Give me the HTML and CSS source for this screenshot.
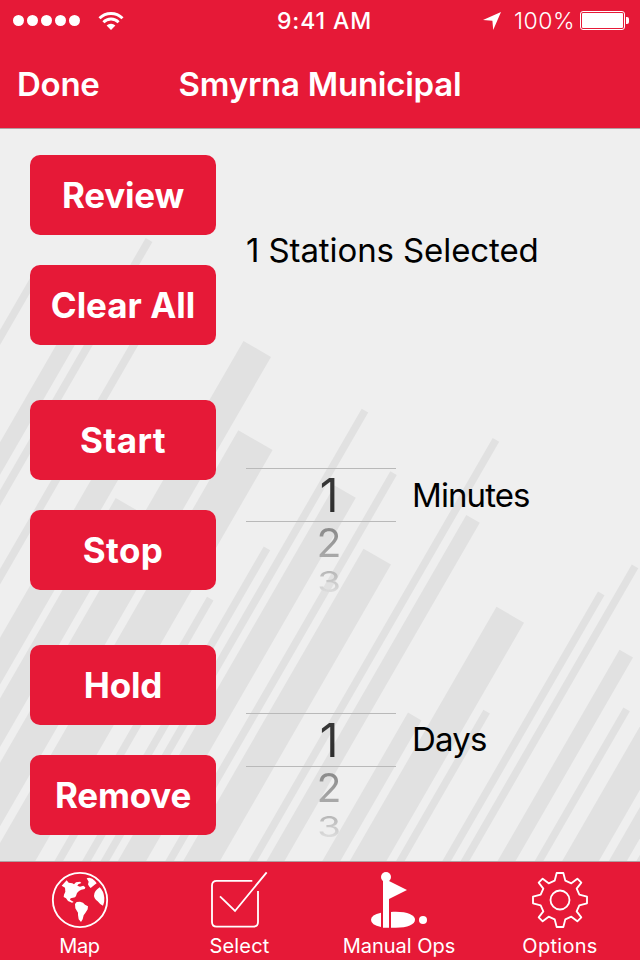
FILE: index.html
```html
<!DOCTYPE html>
<html lang="en">
<head>
  <meta charset="UTF-8">
  <title>Smyrna Municipal</title>
  <link rel="stylesheet" href="styles.css">
</head>
<body>
  <header>
    <div class="status-bar">
      <div class="status-left">
        <span class="dot"></span><span class="dot"></span><span class="dot"></span><span class="dot"></span><span class="dot"></span>
        <svg class="wifi" width="26" height="20" viewBox="0 0 26 20">
          <g fill="none" stroke="#fff" stroke-width="2.9">
            <path d="M1.500 7.200A16.300 16.300 0 0 1 24.500 7.200"/>
            <path d="M5.400 11.200A10.800 10.800 0 0 1 20.600 11.200"/>
          </g>
          <path d="M8.600 14.600A6.200 6.200 0 0 1 17.400 14.600L13 19Z" fill="#fff"/>
        </svg>
      </div>
      <div class="time">9:41 AM</div>
      <div class="status-right">
        <svg class="location" width="20" height="20" viewBox="0 0 20 20">
          <path d="M19 1L11.200 19L10.400 9.800L1 9Z" fill="#fff"/>
        </svg>
        <span class="percent">100%</span>
        <svg class="battery" width="50" height="20" viewBox="0 0 50 20">
          <rect x="0.5" y="0.5" width="44" height="18" rx="2.5" fill="none" stroke="#fff"/>
          <rect x="2" y="2" width="41" height="15" rx="1" fill="#fff"/>
          <path d="M46 6h1q2 0 2 2v3q0 2-2 2H46z" fill="#fff"/>
        </svg>
      </div>
    </div>
    <div class="nav-bar">
      <a class="done">Done</a>
      <h1>Smyrna Municipal</h1>
    </div>
  </header>

  <main>
    <svg class="stripes" width="640" height="732" viewBox="0 129 640 732" fill="#e1e1e1">
      <path d="M37 266l6.500 3.750l-433 750l-6.500-3.750z"/>
      <path d="M90 286.400l14 8.100l-433 750l-14-8.100z"/>
      <path d="M145.700 238l6.700 3.900l-433 750l-6.700-3.900z"/>
      <path d="M150 309.300l6.700 3.900l-433 750l-6.700-3.900z"/>
      <path d="M120 429.800l20.300 11.700l-433 750l-20.300-11.700z"/>
      <path d="M115.700 498l21 12.100l-433 750l-21-12.100z"/>
      <path d="M243.500 341l27.500 15.900l-433 750l-27.500-15.900z"/>
      <path d="M238.300 430.200l34.300 19.800l-433 750l-34.300-19.800z"/>
      <path d="M207 596.800l6.500 3.750l-433 750l-6.500-3.750z"/>
      <path d="M263.700 546.500l6.500 3.750l-433 750l-6.500-3.750z"/>
      <path d="M361.700 408.700l6.500 3.750l-433 750l-6.500-3.750z"/>
      <path d="M334.600 485.600l21.200 12.200l-433 750l-21.200-12.200z"/>
      <path d="M390.300 471.300l6.500 3.750l-433 750l-6.500-3.750z"/>
      <path d="M363.500 548.700l27.500 15.900l-433 750l-27.500-15.900z"/>
      <path d="M492.700 438l6.500 3.750l-433 750l-6.500-3.750z"/>
      <path d="M466.300 515l13.500 7.800l-433 750l-13.500-7.800z"/>
      <path d="M408 712.600l13.500 7.800l-433 750l-13.500-7.800z"/>
      <path d="M496.500 606.800l27.500 15.900l-433 750l-27.500-15.900z"/>
      <path d="M483.400 709.700l6.500 3.750l-433 750l-6.500-3.750z"/>
      <path d="M598 591.400l6.500 3.750l-433 750l-6.500-3.750z"/>
      <path d="M631.800 564.500l6.500 3.750l-433 750l-6.500-3.750z"/>
      <path d="M619.500 649.800l13.500 7.800l-433 750l-13.500-7.800z"/>
      <path d="M623.400 707.400l6.500 3.750l-433 750l-6.500-3.750z"/>
      <path d="M660 691.600l27.500 15.900l-433 750l-27.500-15.900z"/>
      <path d="M660 772.400l13.500 7.800l-433 750l-13.500-7.800z"/>
      <path d="M660 820l27.500 15.900l-433 750l-27.500-15.900z"/>
    </svg>

    <section class="group">
      <div class="buttons">
        <button class="review">Review</button>
        <button class="clear">Clear All</button>
      </div>
      <p class="selected-count">1 Stations Selected</p>
    </section>

    <section class="group">
      <div class="buttons">
        <button class="start">Start</button>
        <button class="stop">Stop</button>
      </div>
      <div class="picker">
        <div class="current"><span>1</span></div>
        <div class="next"><span>2</span></div>
        <div class="last"><span>3</span></div>
      </div>
      <p class="minutes">Minutes</p>
    </section>

    <section class="group">
      <div class="buttons">
        <button class="hold">Hold</button>
        <button class="remove">Remove</button>
      </div>
      <div class="picker">
        <div class="current"><span>1</span></div>
        <div class="next"><span>2</span></div>
        <div class="last"><span>3</span></div>
      </div>
      <p class="days">Days</p>
    </section>
  </main>

  <nav class="tab-bar">
    <a class="tab">
      <svg width="58" height="58" viewBox="0 0 174 174">
        <circle cx="87" cy="87" r="81.500" fill="none" stroke="#fff" stroke-width="5.500"/>
        <g fill="#fff">
          <path d="M32 44L47 28L53 35L64 37L69 40L75 34L87 32L91 36L82 40L79 44L87 47L97 44L103 49L101 54L91 56L84 60L78 66L75 75L72 79L66 80L59 82L57 86L62 89L68 93L63 95L51 90L45 82L38 78L39 71L43 62L42 50Z"/>
          <path d="M72 99L77 93L87 92L96 95L102 101L111 106L110 115L103 126L98 133L95 145L90 153L83 145L81 132L81 125L73 112Z"/>
          <path d="M107 22L115 20L124 23L132 30L137 37L130 42L119 51L114 46L111 40L113 32Z"/>
          <path d="M146 49Q158 60 160 80Q161 93 156 104Q147 101 140 91Q129 82 129 74Q129 60 146 49Z"/>
        </g>
      </svg>
      <span class="map">Map</span>
    </a>
    <a class="tab">
      <svg width="58" height="58" viewBox="0 0 174 174" fill="none" stroke="#fff" stroke-width="5.500">
        <path d="M124 29.500H17Q3 29.500 3 43.500V153Q3 167 17 167H127Q141 167 141 153V60"/>
        <path d="M27 76L72 120L167 4"/>
      </svg>
      <span class="select">Select</span>
    </a>
    <a class="tab">
      <svg width="58" height="58" viewBox="0 0 174 174" fill="#fff">
        <path d="M30 125Q0 131 0 146.500Q0 162 30 168Z"/>
        <path d="M60 123C104 120 132 131 132 146.500C132 162 104 173 60 170Z"/>
        <path d="M36 26H54V30L108 57L54 84V170H36Z"/>
        <circle cx="45" cy="18" r="15"/>
        <circle cx="156" cy="147" r="12"/>
      </svg>
      <span class="ops">Manual Ops</span>
    </a>
    <a class="tab">
      <svg width="58" height="58" viewBox="-87 -87 174 174" fill="none" stroke="#fff" stroke-width="5.5" stroke-linejoin="round">
        <circle r="28.500"/>
        <path d="M-10-81H10L16-58L34-50L52-64L64-52L50-34L58-16L81-10V10L58 16L50 34L64 52L52 64L34 50L16 58L10 81H-10L-16 58L-34 50L-52 64L-64 52L-50 34L-58 16L-81 10V-10L-58-16L-50-34L-64-52L-52-64L-34-50L-16-58Z"/>
      </svg>
      <span class="options">Options</span>
    </a>
  </nav>
</body>
</html>
```

FILE: styles.css
```css
* {
  box-sizing: border-box;
}
body {
  margin: 0;
  width: 640px;
  height: 960px;
  display: flex;
  flex-direction: column;
  overflow: hidden;
  background: #efefef;
  font-family: Inter, "Liberation Sans", sans-serif;
  white-space: nowrap;
}
header {
  height: 129px;
  background: #e61937;
  border-bottom: 1px solid #b0a0a2;
  color: #fff;
}
.status-bar {
  height: 41px;
  padding: 0 10px 0 13px;
  display: grid;
  grid-template-columns: 1fr auto 1fr;
  align-items: center;
}
.status-left,
.status-right {
  display: flex;
  align-items: center;
}
.status-right {
  justify-content: flex-end;
}
.dot {
  width: 11px;
  height: 11px;
  margin-right: 3px;
  border-radius: 50%;
  background: #fff;
}
.wifi {
  margin-left: 15px;
}
.time {
  font-size: 23px;
  font-weight: 500;
  letter-spacing: 0.9px;
  padding-left: 6px;
}
.percent {
  margin: 0 5px 0 12px;
  font-size: 23px;
  font-weight: 300;
  letter-spacing: 0.5px;
}
.nav-bar {
  height: 85px;
  padding: 0 17px;
  display: grid;
  grid-template-columns: 1fr auto 1fr;
  align-items: center;
}
.done,
h1 {
  margin: 0;
  font-size: 33px;
  font-weight: 600;
  letter-spacing: -0.25px;
}
main {
  position: relative;
  height: 732px;
  padding: 26px 30px;
  display: flex;
  flex-direction: column;
  gap: 55px;
  z-index: 0;
}
.stripes {
  position: absolute;
  top: 0;
  left: 0;
  z-index: -1;
}
.group {
  height: 190px;
  display: flex;
  align-items: center;
}
.buttons {
  width: 186px;
  margin-right: 30px;
  display: flex;
  flex-direction: column;
  gap: 30px;
}
button {
  height: 80px;
  padding: 0;
  border: none;
  border-radius: 10px;
  background: #e61937;
  color: #fff;
  font-family: inherit;
  font-size: 35px;
  font-weight: 700;
  letter-spacing: -0.2px;
}
.clear {
  letter-spacing: 0;
}
.start,
.stop {
  letter-spacing: 0.4px;
}
p {
  margin: 0;
  font-size: 33px;
  color: #000;
}
.selected-count {
  letter-spacing: -0.1px;
}
.minutes {
  letter-spacing: -0.9px;
}
.days {
  padding-bottom: 2px;
  letter-spacing: -0.8px;
}
.picker {
  width: 150px;
  height: 190px;
  margin-right: 16px;
  padding-top: 68px;
  text-align: center;
}
.picker div {
  padding-left: 16px;
}
.picker span {
  display: inline-block;
  color: transparent;
  -webkit-background-clip: text;
  background-clip: text;
}
.current {
  height: 54px;
  border-top: 1px solid #b9b9b9;
  border-bottom: 1px solid #b9b9b9;
  font-size: 46px;
  line-height: 53px;
}
.current span {
  background-image: linear-gradient(#3a3a3a, #2a2a2a);
}
.next {
  height: 42px;
  font-size: 39px;
  line-height: 42px;
}
.next span {
  background-image: linear-gradient(#8c8c8c 20%, #a8a8a8 80%);
  transform: scaleX(1.05);
}
.last {
  height: 26px;
  font-size: 36px;
  line-height: 36px;
}
.last span {
  background-image: linear-gradient(#b8b8b8 15%, #dcdcdc 85%);
  transform: scale(1.07, 0.8);
}
.tab-bar {
  height: 99px;
  padding-top: 9px;
  display: grid;
  grid-template-columns: repeat(4, 1fr);
  background: #e61937;
  border-top: 1px solid #b0a0a2;
}
.tab {
  display: flex;
  flex-direction: column;
  align-items: center;
  color: #fff;
  font-size: 20px;
  line-height: 24px;
}
.tab span {
  margin-top: 5px;
  letter-spacing: 0.3px;
}
.tab .map {
  padding-right: 1px;
  letter-spacing: -0.3px;
}
.tab .select {
  padding-right: 1px;
  letter-spacing: 0.2px;
}
.tab .ops {
  padding-right: 2px;
  letter-spacing: 0;
}
```
